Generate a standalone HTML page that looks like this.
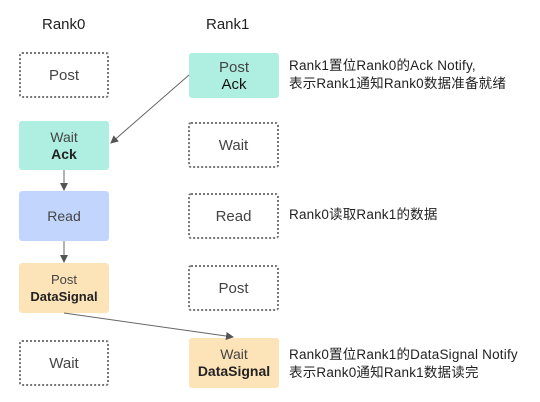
<!DOCTYPE html>
<html><head><meta charset="utf-8"><style>
body{margin:0;width:540px;height:402px;background:#fff;position:relative;font-family:"Liberation Sans","Noto Sans CJK SC",sans-serif;color:#333;overflow:hidden}
.b{position:absolute;box-sizing:border-box;border-radius:3px;display:flex;flex-direction:column;align-items:center;justify-content:center;font-size:14px;line-height:17px;color:#444}
.d{border:2px dotted #777;border-radius:3px;font-size:15px}
.t{background:#aeefe1}.bl{background:#c2d6fd}.o{background:#fde3b8}
.b b{color:#222}
.lab{position:absolute;font-size:15px;color:#222}
.n{position:absolute;left:289px;font-size:13.5px;line-height:18px;color:#222;white-space:nowrap;letter-spacing:0.2px}
</style></head><body>
<div class="lab" style="left:42px;top:16px">Rank0</div>
<div class="lab" style="left:206px;top:16px">Rank1</div>

<div class="b d" style="left:19px;top:52px;width:90px;height:46px">Post</div>
<div class="b t" style="left:19px;top:121px;width:90px;height:49px"><span>Wait</span><b>Ack</b></div>
<div class="b bl" style="left:19px;top:191px;width:90px;height:50px">Read</div>
<div class="b o" style="left:19px;top:263px;width:90px;height:50px;font-size:13px"><span>Post</span><b>DataSignal</b></div>
<div class="b d" style="left:19px;top:340px;width:90px;height:46px">Wait</div>

<div class="b t" style="left:189px;top:53px;width:90px;height:45px;font-size:15px"><span>Post</span><b style="font-weight:normal;color:#111">Ack</b></div>
<div class="b d" style="left:188px;top:122px;width:91px;height:46px">Wait</div>
<div class="b d" style="left:188px;top:193px;width:91px;height:46px">Read</div>
<div class="b d" style="left:188px;top:265px;width:91px;height:46px">Post</div>
<div class="b o" style="left:189px;top:338px;width:90px;height:50px"><span>Wait</span><b>DataSignal</b></div>

<svg width="540" height="402" style="position:absolute;left:0;top:0">
<defs><marker id="a" markerWidth="8" markerHeight="8" refX="7" refY="4" orient="auto" markerUnits="userSpaceOnUse"><path d="M0,0L8,4L0,8z" fill="#555"/></marker></defs>
<g stroke="#666" stroke-width="1" fill="none">
<line x1="189" y1="75" x2="111" y2="143" marker-end="url(#a)"/>
<line x1="64" y1="170" x2="64" y2="190" marker-end="url(#a)"/>
<line x1="64" y1="241" x2="64" y2="262" marker-end="url(#a)"/>
<line x1="64" y1="313" x2="233" y2="337" marker-end="url(#a)"/>
</g></svg>

<div class="n" style="top:57px">Rank1置位Rank0的Ack Notify,<br>表示Rank1通知Rank0数据准备就绪</div>
<div class="n" style="top:206px">Rank0读取Rank1的数据</div>
<div class="n" style="top:346px">Rank0置位Rank1的DataSignal Notify<br>表示Rank0通知Rank1数据读完</div>
</body></html>
